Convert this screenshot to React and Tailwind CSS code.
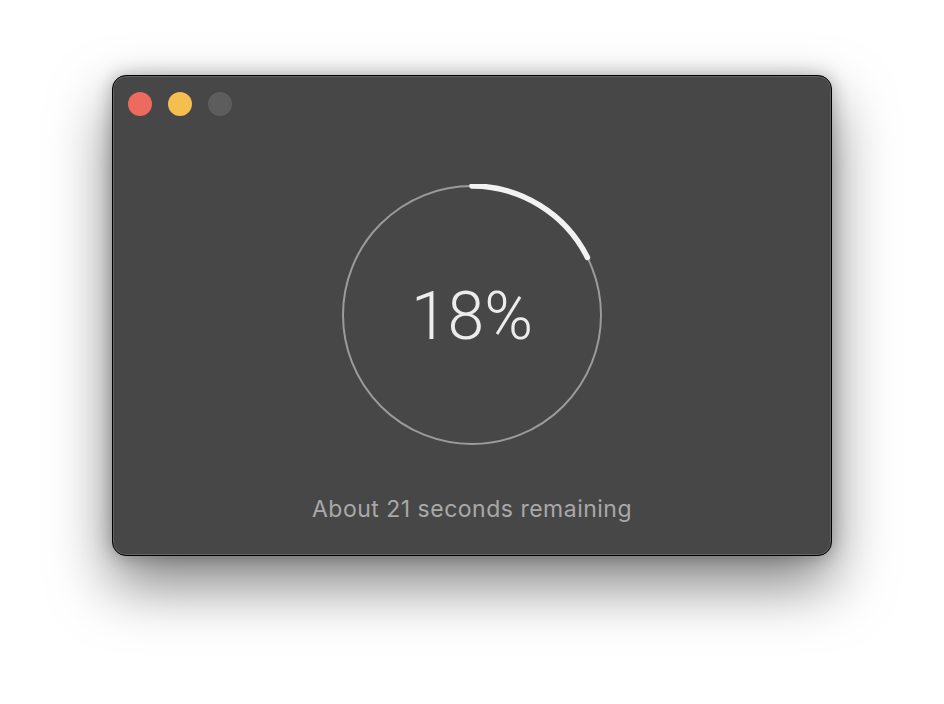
const RADIUS = 129;
const CIRC = 2 * Math.PI * RADIUS;

function ProgressRing({ percent }) {
  const dash = (percent / 100) * CIRC;
  return (
    <div className="grid place-items-center">
      <svg width="262" height="262" viewBox="0 0 262 262" className="[grid-area:1/1]">
        <circle cx="131" cy="131" r={RADIUS} fill="none" stroke="#9b9b9b" strokeWidth="2" />
        <circle
          cx="131"
          cy="131"
          r={RADIUS}
          fill="none"
          stroke="#f2f2f2"
          strokeWidth="5.5"
          strokeLinecap="round"
          strokeDasharray={`${dash - 3} ${CIRC}`}
          transform="rotate(-90 131 131)"
        />
      </svg>
      <span className="[grid-area:1/1] font-['Roboto',sans-serif] font-light text-[66px] leading-none text-[#ececec] pt-[3px]">
        {percent}%
      </span>
    </div>
  );
}

export default function App() {
  return (
    <div className="min-h-[704px] w-full bg-white flex justify-center">
      <div className="mt-[75px] w-[720px] h-[481px] rounded-[14px] bg-[#474747] border border-black shadow-[inset_0_0_0_1px_rgba(255,255,255,0.16),0_28px_60px_rgba(0,0,0,0.5),0_0_18px_rgba(0,0,0,0.28)] flex flex-col">
        {/* traffic lights */}
        <div className="flex items-center gap-4 pl-[15px] pt-[16px]">
          <span className="w-6 h-6 rounded-full bg-[#ec6a5e]" />
          <span className="w-6 h-6 rounded-full bg-[#f4bf4f]" />
          <span className="w-6 h-6 rounded-full bg-[#5d5d5d]" />
        </div>

        <div className="mt-[68px] flex justify-center">
          <ProgressRing percent={18} />
        </div>

        <p className="mt-[49px] text-center font-['Inter',sans-serif] text-[23px] leading-7 tracking-[0.5px] text-[#a9a9a9]">
          About 21 seconds remaining
        </p>
      </div>
    </div>
  );
}
